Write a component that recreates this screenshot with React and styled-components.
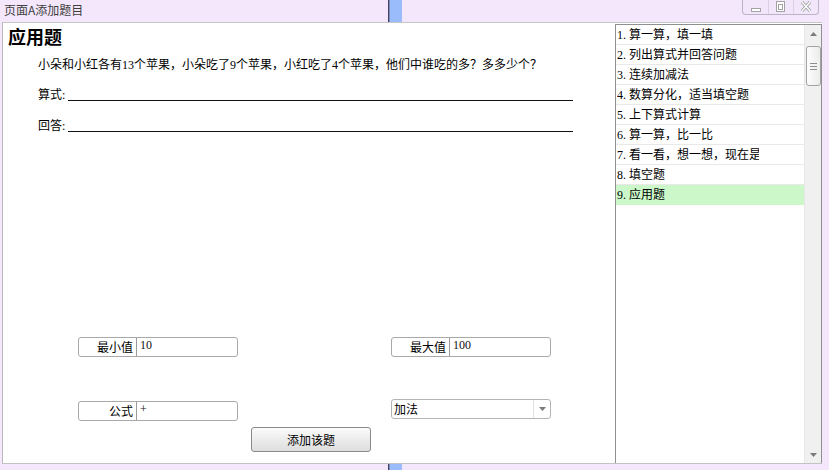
import React from "react";
import styled, { createGlobalStyle } from "styled-components";

const Global = createGlobalStyle`
  html, body { margin: 0; padding: 0; overflow: hidden; }
  body {
    font-family: "Liberation Serif", "Noto Sans CJK SC", serif;
    font-size: 12px;
    color: #000;
  }
  * { box-sizing: border-box; }
`;

const Window = styled.div`
  position: relative;
  width: 829px;
  height: 470px;
  background: #f4e7fc;
  display: flex;
  flex-direction: column;
`;

const TitleBar = styled.div`
  height: 22px;
  flex: none;
  display: flex;
  align-items: flex-start;
`;

const Title = styled.div`
  padding: 3px 0 0 4px;
  font-family: "Noto Sans CJK SC", sans-serif;
  font-size: 12px;
  line-height: 14px;
  color: #3e3e3e;
`;

const Controls = styled.div`
  margin-left: auto;
  margin-right: 10px;
  width: 77px;
  height: 15px;
  display: flex;
  border: 1px solid #bdb3c6;
  border-top: none;
  border-radius: 0 0 4px 4px;
  background: #f2e6fa;
`;

const ControlCell = styled.div`
  width: 25px;
  height: 100%;
  display: flex;
  align-items: center;
  justify-content: center;
  border-left: ${(p) => (p.$first ? "none" : "1px solid #dccfe6")};
`;

const Strip = styled.div`
  position: absolute;
  left: 388px;
  width: 14px;
  top: ${(p) => p.$top}px;
  height: ${(p) => p.$h}px;
  background: linear-gradient(
    to right,
    #43435e 0,
    #43435e 1px,
    #7b8bbd 1px,
    #7b8bbd 2px,
    #9bbcfa 2px
  );
`;

const Body = styled.div`
  display: flex;
  height: 442px;
  margin: 0 7px 0 2px;
  background: #fff;
  border-top: 1px solid #c6c6c6;
  border-left: 1px solid #b9b9b9;
  border-bottom: 1px solid #c2c2c2;
`;

const Main = styled.div`
  width: 612px;
  flex: none;
  display: flex;
  flex-direction: column;
  padding: 2px 0 0 5px;
`;

const Heading = styled.h1`
  margin: 0;
  font-family: "Noto Sans CJK SC", sans-serif;
  font-size: 18px;
  font-weight: 700;
  line-height: 22px;
`;

const Question = styled.div`
  display: flex;
  flex-direction: column;
  padding-left: 30px;
  margin-top: 11px;
`;

const Text = styled.div`
  line-height: 14px;
  white-space: nowrap;
`;

const AnswerRow = styled.div`
  display: flex;
  align-items: flex-start;
  margin-top: ${(p) => p.$gap}px;
`;

const AnswerLabel = styled.span`
  width: 30px;
  flex: none;
  line-height: 14px;
  white-space: nowrap;
`;

const AnswerLine = styled.div`
  width: 505px;
  height: 13px;
  border-bottom: 1px solid #111;
`;

const Form = styled.div`
  margin-top: auto;
  padding: 0 0 11px 70px;
  display: flex;
  flex-direction: column;
`;

const FieldRow = styled.div`
  display: grid;
  grid-template-columns: 313px 160px;
  align-items: start;
  margin-top: ${(p) => p.$gap}px;
`;

const Field = styled.div`
  width: 160px;
  height: 20px;
  display: flex;
  border: 1px solid #a9a9a9;
  border-radius: 3px;
  background: #fff;
`;

const FieldLabel = styled.div`
  width: 58px;
  flex: none;
  text-align: right;
  padding-right: 3px;
  border-right: 1px solid #9a9a9a;
  font-family: "Noto Sans CJK SC", sans-serif;
  line-height: 18px;
`;

const FieldValue = styled.div`
  padding-left: 3px;
  line-height: 15px;
  color: #111;
`;

const Select = styled.div`
  width: 160px;
  height: 20px;
  margin-top: -2px;
  display: flex;
  border: 1px solid #b4b4b4;
  border-radius: 3px;
  background: #fff;
`;

const SelectText = styled.div`
  flex: 1;
  padding-left: 2px;
  font-family: "Noto Sans CJK SC", sans-serif;
  line-height: 18px;
`;

const SelectArrow = styled.div`
  width: 17px;
  flex: none;
  display: flex;
  align-items: center;
  justify-content: center;
  border-left: 1px solid #e2e2e2;
`;

const ButtonRow = styled.div`
  margin-top: 6px;
  padding-left: 173px;
`;

const Button = styled.button`
  width: 120px;
  height: 25px;
  padding: 0;
  border: 1px solid #8a8a8a;
  border-radius: 3px;
  background: linear-gradient(to bottom, #fbfbfb, #ececec 50%, #dedede);
  font-family: "Noto Sans CJK SC", sans-serif;
  font-size: 12px;
  color: #000;
`;

const ListBox = styled.div`
  width: 207px;
  flex: none;
  margin-top: 1px;
  display: flex;
  border: 1px solid #8f9092;
  border-bottom: none;
`;

const Items = styled.div`
  flex: 1;
  display: flex;
  flex-direction: column;
`;

const Item = styled.div`
  height: 20px;
  flex: none;
  padding-left: 1px;
  border-bottom: 1px solid ${(p) => (p.$selected ? "#cbf7c9" : "#e9e9e9")};
  background: ${(p) => (p.$selected ? "#cbf7c9" : "transparent")};
  display: flex;
  align-items: center;
`;

const ItemText = styled.span`
  display: block;
  width: 142px;
  overflow: hidden;
  white-space: nowrap;
  line-height: 16px;
`;

const Scrollbar = styled.div`
  width: 17px;
  flex: none;
  display: flex;
  flex-direction: column;
  align-items: center;
  background: #f0f0f0;
  border-left: 1px solid #e6e6e6;
`;

const ArrowBox = styled.div`
  width: 16px;
  height: 17px;
  flex: none;
  display: flex;
  align-items: center;
  justify-content: center;
`;

const Thumb = styled.div`
  width: 15px;
  height: 40px;
  margin-top: 4px;
  display: flex;
  align-items: center;
  justify-content: center;
  border: 1px solid #a2a2a2;
  border-radius: 3px;
  background: linear-gradient(to right, #fdfdfd, #ececec);
`;

const Spacer = styled.div`
  flex: 1;
`;

const Tri = ({ down }) => (
  <svg width="7" height="4" viewBox="0 0 7 4">
    <polygon
      points={down ? "0,0 7,0 3.5,4" : "0,4 7,4 3.5,0"}
      fill="#7a7a7a"
    />
  </svg>
);

const Grip = () => (
  <svg width="7" height="7" viewBox="0 0 7 7">
    <rect x="0" y="0" width="7" height="1" fill="#8d8d8d" />
    <rect x="0" y="3" width="7" height="1" fill="#8d8d8d" />
    <rect x="0" y="6" width="7" height="1" fill="#8d8d8d" />
  </svg>
);

const MinimizeIcon = () => (
  <svg width="12" height="14" viewBox="0 0 12 14">
    <rect x="1.5" y="8.5" width="9" height="3" fill="#fff" stroke="#a3a3a3" />
  </svg>
);

const MaximizeIcon = () => (
  <svg width="12" height="14" viewBox="0 0 12 14">
    <rect x="1.5" y="1.5" width="8" height="10" fill="#fff" stroke="#a3a3a3" />
    <rect x="3.5" y="4.5" width="4" height="5" fill="#fff" stroke="#a3a3a3" />
  </svg>
);

const CloseIcon = () => (
  <svg width="12" height="14" viewBox="0 0 12 14">
    <path d="M2 2 L10 11 M10 2 L2 11" stroke="#a3a3a3" strokeWidth="3.2" />
    <path d="M2 2 L10 11 M10 2 L2 11" stroke="#fff" strokeWidth="1.2" />
  </svg>
);

const topics = [
  "算一算，填一填",
  "列出算式并回答问题",
  "连续加减法",
  "数算分化，适当填空题",
  "上下算式计算",
  "算一算，比一比",
  "看一看，想一想，现在是几点",
  "填空题",
  "应用题",
];

export default function App() {
  return (
    <>
      <Global />
      <Window>
        <TitleBar>
          <Title>页面A添加题目</Title>
          <Controls>
            <ControlCell $first>
              <MinimizeIcon />
            </ControlCell>
            <ControlCell>
              <MaximizeIcon />
            </ControlCell>
            <ControlCell>
              <CloseIcon />
            </ControlCell>
          </Controls>
        </TitleBar>

        <Body>
          <Main>
            <Heading>应用题</Heading>
            <Question>
              <Text>
                小朵和小红各有13个苹果，小朵吃了9个苹果，小红吃了4个苹果，他们中谁吃的多？多多少个？
              </Text>
              <AnswerRow $gap={16}>
                <AnswerLabel>算式:</AnswerLabel>
                <AnswerLine />
              </AnswerRow>
              <AnswerRow $gap={17}>
                <AnswerLabel>回答:</AnswerLabel>
                <AnswerLine />
              </AnswerRow>
            </Question>

            <Form>
              <FieldRow $gap={0}>
                <Field>
                  <FieldLabel>最小值</FieldLabel>
                  <FieldValue>10</FieldValue>
                </Field>
                <Field>
                  <FieldLabel>最大值</FieldLabel>
                  <FieldValue>100</FieldValue>
                </Field>
              </FieldRow>
              <FieldRow $gap={44}>
                <Field>
                  <FieldLabel>公式</FieldLabel>
                  <FieldValue>+</FieldValue>
                </Field>
                <Select>
                  <SelectText>加法</SelectText>
                  <SelectArrow>
                    <Tri down />
                  </SelectArrow>
                </Select>
              </FieldRow>
              <ButtonRow>
                <Button>添加该题</Button>
              </ButtonRow>
            </Form>
          </Main>

          <ListBox>
            <Items>
              {topics.map((t, i) => (
                <Item key={t} $selected={i === topics.length - 1}>
                  <ItemText>
                    {i + 1}. {t}
                  </ItemText>
                </Item>
              ))}
            </Items>
            <Scrollbar>
              <ArrowBox>
                <Tri />
              </ArrowBox>
              <Thumb>
                <Grip />
              </Thumb>
              <Spacer />
              <ArrowBox>
                <Tri down />
              </ArrowBox>
            </Scrollbar>
          </ListBox>
        </Body>

        <Strip $top={0} $h={22} />
        <Strip $top={464} $h={6} />
      </Window>
    </>
  );
}
